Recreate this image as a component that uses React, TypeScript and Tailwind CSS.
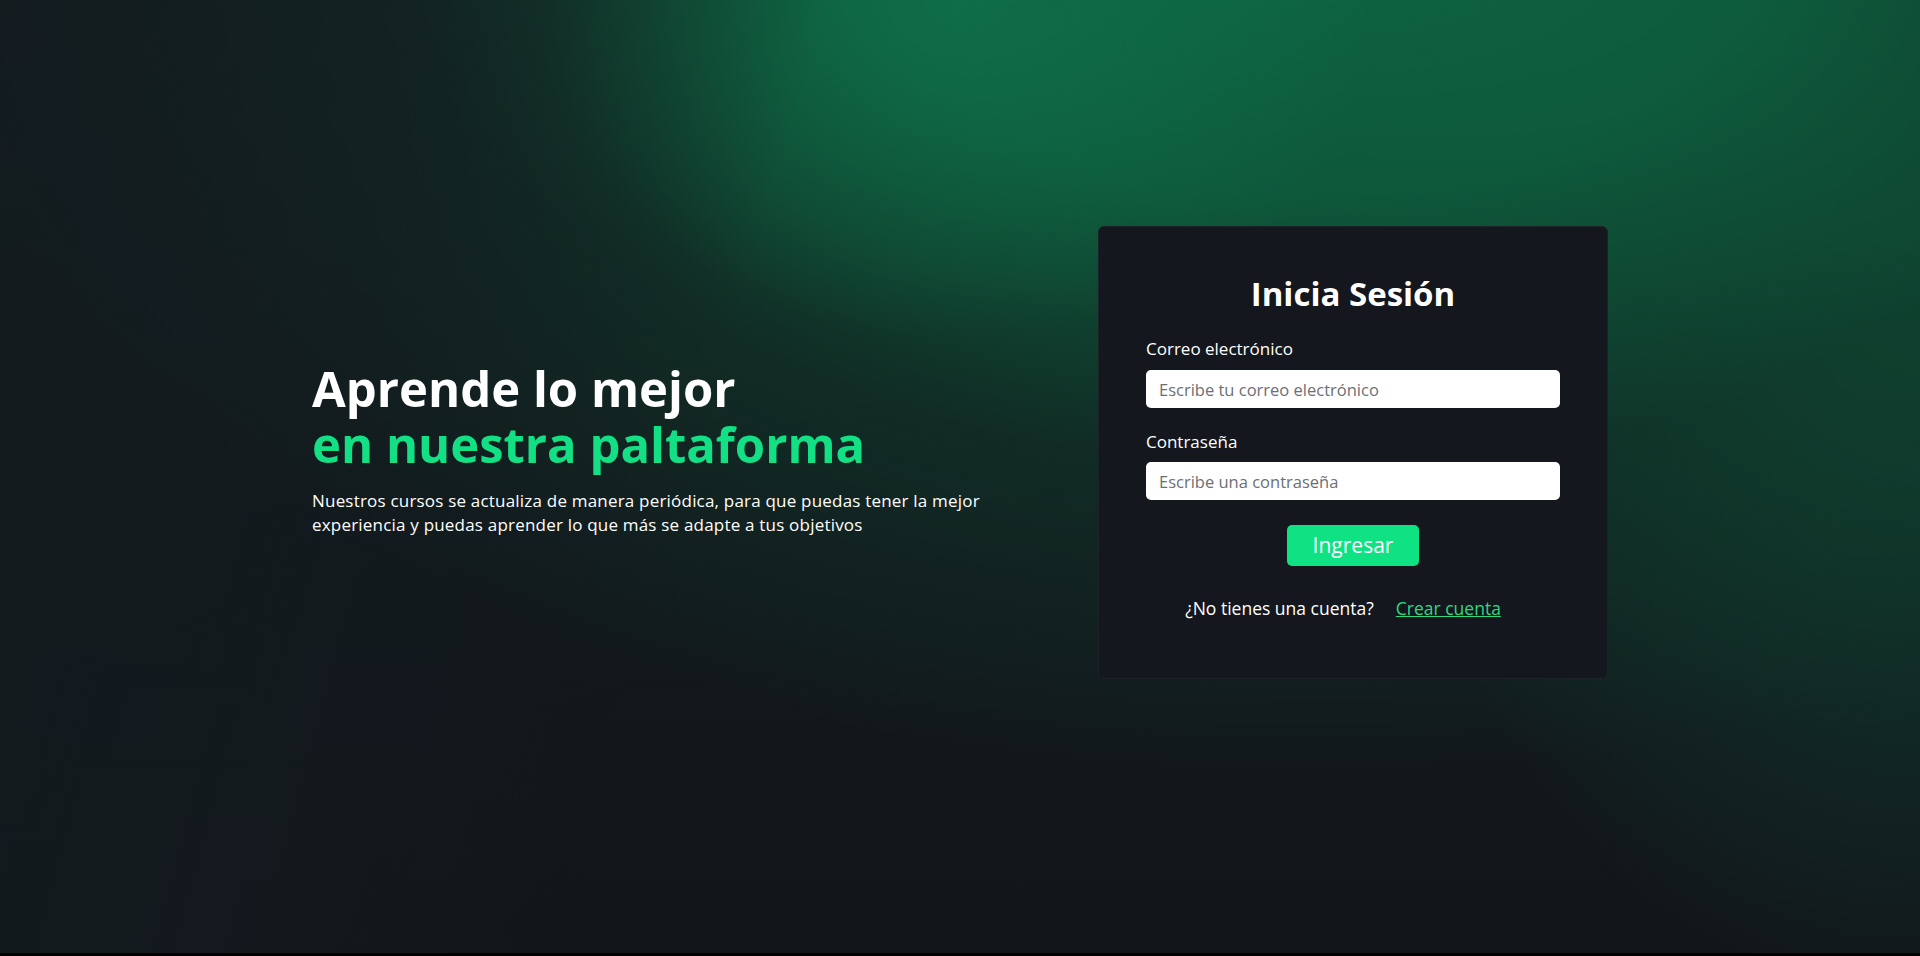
import React from 'react';

const font = { fontFamily: '"Open Sans", "Noto Sans", sans-serif' };

const LoginCard: React.FC = () => {
  return (
    <div className="w-[510px] h-[453px] rounded-md bg-[#14171d] border border-[#1d2229] px-[47px] pt-[44px] flex flex-col">
      <h2 className="text-center text-[33px] font-bold text-white leading-[46px]">Inicia Sesión</h2>
      <label className="mt-[20px] text-[17px] text-white leading-[24px]">Correo electrónico</label>
      <input
        type="email"
        placeholder="Escribe tu correo electrónico"
        className="mt-[9px] h-[38px] w-full rounded-[5px] bg-white px-[13px] text-[16.5px] text-gray-700 placeholder:text-[#6b6f76] outline-none"
      />
      <label className="mt-[22px] text-[17px] text-white leading-[24px]">Contraseña</label>
      <input
        type="password"
        placeholder="Escribe una contraseña"
        className="mt-[8px] h-[38px] w-full rounded-[5px] bg-white px-[13px] text-[16.5px] text-gray-700 placeholder:text-[#6b6f76] outline-none"
      />
      <button className="mx-auto mt-[25px] h-[41px] w-[132px] rounded-[5px] bg-[#0ee283] text-[21px] text-white">
        Ingresar
      </button>
      <div className="mt-[29px] pr-[20px] flex justify-center items-center gap-[22px] text-[17.5px]">
        <span className="text-white">¿No tienes una cuenta?</span>
        <a href="#" className="text-[#2fd782] underline">Crear cuenta</a>
      </div>
    </div>
  );
};

const App: React.FC = () => {
  return (
    <div className="bg-black pb-[3px]" style={font}>
      <main className="h-[953px] pb-[48px] flex items-center justify-center bg-[#12161b] bg-[linear-gradient(105deg,rgba(19,27,31,0.9)_0%,rgba(19,27,31,0.55)_20%,rgba(19,27,31,0)_38%),radial-gradient(ellipse_420px_340px_at_960px_0px,rgba(15,114,74,0.8)_0%,rgba(15,114,74,0)_100%),radial-gradient(ellipse_1400px_900px_at_1300px_-120px,rgba(13,104,68,1)_0%,rgba(13,98,64,0.85)_35%,rgba(15,62,44,0.5)_65%,rgba(18,22,27,0)_100%),radial-gradient(ellipse_560px_760px_at_1920px_240px,rgba(12,100,66,0.6)_0%,rgba(12,100,66,0)_100%),linear-gradient(180deg,#131d20_0%,#12191d_50%,#12161b_100%)]">
        <div className="w-[1296px] flex items-center justify-between">
          <div className="w-[690px] -mt-[8px]">
            <h1 className="text-[49px] font-bold leading-[56px] text-white">
              Aprende lo mejor
              <br />
              <span className="text-[#13e085]">en nuestra paltaforma</span>
            </h1>
            <p className="mt-[17px] text-[17px] leading-[24px] tracking-[0.2px] text-white">
              Nuestros cursos se actualiza de manera periódica, para que puedas tener la mejor
              <br />
              experiencia y puedas aprender lo que más se adapte a tus objetivos
            </p>
          </div>
          <LoginCard />
        </div>
      </main>
    </div>
  );
};

export default App;
